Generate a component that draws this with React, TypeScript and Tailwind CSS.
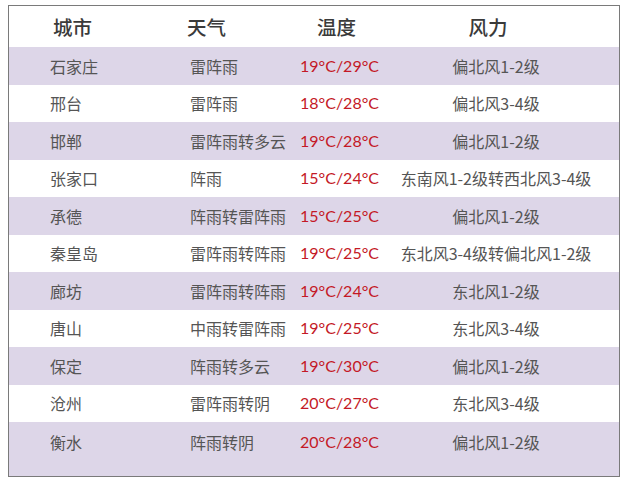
import React from "react";

type Row = { city: string; weather: string; temp: string; wind: string };

const rows: Row[] = [
  { city: "石家庄", weather: "雷阵雨", temp: "19°C/29°C", wind: "偏北风1-2级" },
  { city: "邢台", weather: "雷阵雨", temp: "18°C/28°C", wind: "偏北风3-4级" },
  { city: "邯郸", weather: "雷阵雨转多云", temp: "19°C/28°C", wind: "偏北风1-2级" },
  { city: "张家口", weather: "阵雨", temp: "15°C/24°C", wind: "东南风1-2级转西北风3-4级" },
  { city: "承德", weather: "阵雨转雷阵雨", temp: "15°C/25°C", wind: "偏北风1-2级" },
  { city: "秦皇岛", weather: "雷阵雨转阵雨", temp: "19°C/25°C", wind: "东北风3-4级转偏北风1-2级" },
  { city: "廊坊", weather: "雷阵雨转阵雨", temp: "19°C/24°C", wind: "东北风1-2级" },
  { city: "唐山", weather: "中雨转雷阵雨", temp: "19°C/25°C", wind: "东北风3-4级" },
  { city: "保定", weather: "阵雨转多云", temp: "19°C/30°C", wind: "偏北风1-2级" },
  { city: "沧州", weather: "雷阵雨转阴", temp: "20°C/27°C", wind: "东北风3-4级" },
  { city: "衡水", weather: "阵雨转阴", temp: "20°C/28°C", wind: "偏北风1-2级" },
];

const cjk = { fontFamily: '"Noto Sans CJK SC", "Noto Sans", sans-serif' };
const lat = { fontFamily: 'Lato, "Liberation Sans", sans-serif' };

export default function App() {
  return (
    <div className="w-[626px] h-[482px] bg-white pt-[5px] pl-[8px]" style={cjk}>
      <div className="w-[612px] h-[472px] border border-[#7a7a7a] flex flex-col">
        <div className="grid grid-cols-[177px_114px_90px_1fr] h-[41px] items-center text-[19.5px] text-[#3a3a3a] font-medium shrink-0">
          <div className="pl-[44px]">城市</div>
          <div className="pl-[1px]">天气</div>
          <div className="pl-[17px]">温度</div>
          <div className="text-center pr-[33px]">风力</div>
        </div>
        {rows.map((r, i) => {
          const last = i === rows.length - 1;
          return (
            <div
              key={r.city}
              className={
                "grid grid-cols-[177px_114px_90px_1fr] text-[16px] text-[#555] " +
                (i % 2 === 0 ? "bg-[#ddd6e8] " : "bg-white ") +
                (last ? "flex-1 items-start pt-[8px]" : "h-[37.5px] items-center")
              }
            >
              <div className="pl-[41px]">{r.city}</div>
              <div className="pl-[4px]">{r.weather}</div>
              <div className="text-[#c41926] text-[16px]" style={lat}>
                {r.temp}
              </div>
              <div className="text-center pr-[17px] whitespace-nowrap">{r.wind}</div>
            </div>
          );
        })}
      </div>
    </div>
  );
}
